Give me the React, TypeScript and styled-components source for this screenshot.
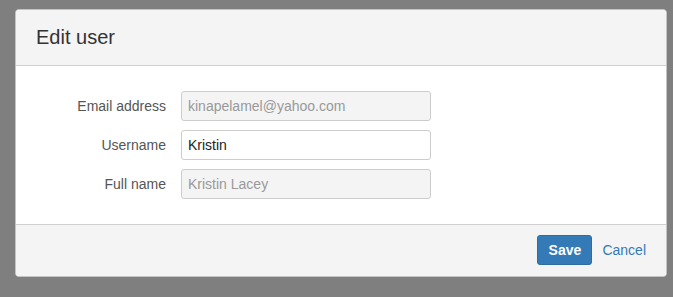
import React from "react";
import styled, {createGlobalStyle} from "styled-components";

const GlobalStyle = createGlobalStyle`
    html, body {
        margin: 0;
        padding: 0;
        background: #7f7f7f;
        font-family: "Liberation Sans", Arial, sans-serif;
    }
`;

const Page = styled.div`
    width: 673px;
    height: 297px;
    padding: 9px 0 0 15px;
    box-sizing: border-box;
`;

const Dialog = styled.div`
    width: 652px;
    height: 268px;
    box-sizing: border-box;
    border: 1px solid #c4c4c4;
    border-radius: 4px;
    background: #fff;
    overflow: hidden;
    display: flex;
    flex-direction: column;
`;

const Header = styled.div`
    height: 56px;
    box-sizing: border-box;
    background: #f4f4f4;
    border-bottom: 1px solid #cfcfcf;
    display: flex;
    align-items: center;
    padding: 0 20px 1px;
`;

const Title = styled.h4`
    margin: 0;
    font-size: 20px;
    font-weight: normal;
    color: #333;
    line-height: 22px;
`;

const Body = styled.form`
    flex: 1;
    padding: 25px 0;
    display: grid;
    grid-template-columns: 150px 250px;
    column-gap: 15px;
    row-gap: 9px;
    align-content: start;
`;

const Label = styled.label`
    text-align: right;
    font-size: 14px;
    color: #555;
    line-height: 30px;
`;

const Input = styled.input<{ $disabled?: boolean }>`
    height: 30px;
    box-sizing: border-box;
    border: 1px solid #ccc;
    border-radius: 3px;
    padding: 0 6px;
    font-family: "Liberation Sans", Arial, sans-serif;
    font-size: 14px;
    color: ${(p) => (p.$disabled ? "#999" : "#222")};
    background: ${(p) => (p.$disabled ? "#f4f4f4" : "#fff")};
    outline: none;
`;

const Footer = styled.div`
    height: 52px;
    box-sizing: border-box;
    background: #f4f4f4;
    border-top: 1px solid #cfcfcf;
    display: flex;
    align-items: flex-start;
    justify-content: flex-end;
    gap: 10px;
    padding: 10px 20px 0;
`;

const SaveButton = styled.button`
    width: 55px;
    height: 30px;
    border: 1px solid #2e6da4;
    border-radius: 3px;
    background: #337ab7;
    color: #fff;
    font-family: "Liberation Sans", Arial, sans-serif;
    font-weight: bold;
    font-size: 14px;
    padding: 0;
`;

const CancelLink = styled.a`
    color: #337ab7;
    font-size: 14px;
    line-height: 30px;
    text-decoration: none;
`;

const fields = [
    {label: "Email address", value: "kinapelamel@yahoo.com", disabled: true},
    {label: "Username", value: "Kristin", disabled: false},
    {label: "Full name", value: "Kristin Lacey", disabled: true},
];

const App: React.FC = () => {
    return (
        <Page>
            <GlobalStyle />
            <Dialog>
                <Header>
                    <Title>Edit user</Title>
                </Header>
                <Body>
                    {fields.map((f) => (
                        <React.Fragment key={f.label}>
                            <Label>{f.label}</Label>
                            <Input defaultValue={f.value} readOnly={f.disabled} $disabled={f.disabled} />
                        </React.Fragment>
                    ))}
                </Body>
                <Footer>
                    <SaveButton type="button">Save</SaveButton>
                    <CancelLink href="#">Cancel</CancelLink>
                </Footer>
            </Dialog>
        </Page>
    );
};

export default App;
